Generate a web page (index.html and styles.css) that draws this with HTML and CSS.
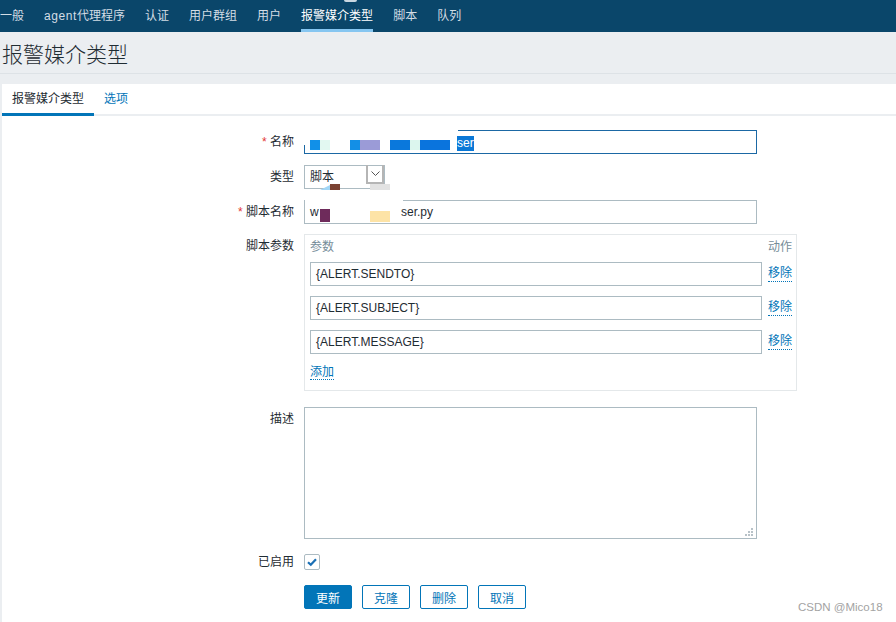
FILE: index.html
```html
<!DOCTYPE html>
<html lang="zh">
<head>
<meta charset="utf-8">
<title>报警媒介类型</title>
<link rel="stylesheet" href="styles.css">
</head>
<body>
<nav class="topnav">
  <a>一般</a><a><span class="latin">agent</span>代理程序</a><a>认证</a><a>用户群组</a><a>用户</a><a class="active">报警媒介类型</a><a>脚本</a><a>队列</a>
  <span class="notch"></span>
</nav>
<header class="header"><h1>报警媒介类型</h1></header>
<main class="wrap">
  <div class="card">
    <div class="tabs"><span class="tab active">报警媒介类型</span><span class="tab">选项</span></div>
    <div class="form">
      <div class="row r-name">
        <div class="lbl"><span class="req">*</span> 名称</div>
        <div class="field input wide focus">
          <span class="cover cover-name"></span>
          <span class="blob b1"></span><span class="blob b2"></span><span class="blob b3"></span><span class="blob b4"></span><span class="blob b5"></span><span class="blob b6"></span><span class="blob b7"></span>
          <span class="sel">ser</span>
        </div>
      </div>
      <div class="row r-type">
        <div class="lbl">类型</div>
        <div class="field select">
          <span class="sel-text">脚本</span>
          <span class="sel-btn"><svg width="9" height="6" viewBox="0 0 9 6"><path d="M0.5 0.5 L4.5 4.5 L8.5 0.5" fill="none" stroke="#555" stroke-width="1"/></svg></span>
          <span class="blob s1"></span><span class="blob s2"></span><span class="blob s3"></span>
        </div>
      </div>
      <div class="row r-script">
        <div class="lbl"><span class="req">*</span> 脚本名称</div>
        <div class="field input wide">
          <span class="cover cover-script"></span>
          <span class="txt">w</span>
          <span class="blob p1"></span><span class="blob p2"></span>
          <span class="tail">ser.py</span>
        </div>
      </div>
      <div class="row r-params">
        <div class="lbl">脚本参数</div>
        <div class="field params">
          <div class="p-head"><span>参数</span><span>动作</span></div>
          <div class="p-row"><div class="input p-input">{ALERT.SENDTO}</div><a class="link">移除</a></div>
          <div class="p-row"><div class="input p-input">{ALERT.SUBJECT}</div><a class="link">移除</a></div>
          <div class="p-row"><div class="input p-input">{ALERT.MESSAGE}</div><a class="link">移除</a></div>
          <div class="p-add"><a class="link">添加</a></div>
        </div>
      </div>
      <div class="row r-desc">
        <div class="lbl">描述</div>
        <div class="field textarea">
          <svg class="grip" width="9" height="9" viewBox="0 0 9 9"><g fill="#b8c2c8"><rect x="6" y="0" width="2" height="2"/><rect x="3" y="3" width="2" height="2"/><rect x="6" y="3" width="2" height="2"/><rect x="0" y="6" width="2" height="2"/><rect x="3" y="6" width="2" height="2"/><rect x="6" y="6" width="2" height="2"/></g></svg>
        </div>
      </div>
      <div class="row r-check">
        <div class="lbl lbl-check">已启用</div>
        <div class="field checkbox"><svg width="14" height="14" viewBox="0 0 14 14"><path d="M3 7.2 L5.8 9.8 L11 4.2" fill="none" stroke="#1a6fb5" stroke-width="2.2"/></svg></div>
      </div>
      <div class="row r-buttons">
        <div class="lbl"></div>
        <div class="buttons">
          <button class="btn primary">更新</button>
          <button class="btn">克隆</button>
          <button class="btn">删除</button>
          <button class="btn">取消</button>
        </div>
      </div>
    </div>
  </div>
</main>
<div class="watermark">CSDN @Mico18</div>
</body>
</html>
```
FILE: styles.css
```css
* { box-sizing: border-box; margin: 0; padding: 0; }
html, body { width: 896px; height: 622px; overflow: hidden; }
body {
  background: #ebeef1;
  font-family: "Liberation Sans", "Noto Sans CJK SC", Arial, sans-serif;
  font-size: 12px;
  color: #1f2c33;
  position: relative;
}
a { text-decoration: none; cursor: pointer; }

.topnav {
  height: 32px;
  background: #0a466a;
  display: flex;
  gap: 20px;
  position: relative;
}
.topnav a {
  display: block;
  height: 32px;
  line-height: 32px;
  color: #d3dde5;
}
.topnav .latin { letter-spacing: 0.6px; }
.topnav a.active {
  color: #ffffff;
  box-shadow: inset 0 -3px 0 #86c6f1;
}
.notch {
  position: absolute;
  left: 344px;
  top: 0;
  width: 13px;
  height: 2px;
  border-radius: 0 0 6px 6px;
  background: #c9d7e1;
}

.header {
  height: 42px;
  border-bottom: 1px solid #dde2e6;
  padding: 11px 0 0 2px;
}
.header h1 {
  font-size: 21px;
  line-height: 24px;
  font-weight: 300;
  color: #1f2c33;
}

.wrap { padding: 10px 0 0 2px; }
.card {
  background: #ffffff;
  height: 538px;
}
.tabs {
  height: 32px;
  display: flex;
  box-shadow: inset 0 -2px 0 #ebeef1;
}
.tab {
  padding: 0 10px;
  line-height: 31px;
  height: 32px;
  color: #0275b8;
}
.tab.active {
  color: #1f2c33;
  box-shadow: inset 0 -3px 0 #0275b8;
}

.form { padding-top: 14px; }
.row { display: flex; align-items: flex-start; }
.r-type { margin-top: 11px; }
.r-script { margin-top: 11px; }
.r-params { margin-top: 10px; }
.r-desc { margin-top: 16px; }
.r-check { margin-top: 15px; }
.r-buttons { margin-top: 15px; }

.lbl {
  width: 292px;
  flex: none;
  text-align: right;
  line-height: 24px;
  margin-right: 10px;
}
.lbl-check { line-height: 16px; }
.req { color: #e33734; }

.field { position: relative; flex: none; }
.input {
  height: 24px;
  border: 1px solid #acbbc2;
  padding: 0 5px;
  line-height: 22px;
  background: #fff;
}
.wide { width: 453px; }
.input.focus { border-color: #1b68a4; }

.cover { position: absolute; background: #fff; }
.cover-name { left: -2px; top: -2px; width: 155px; height: 16px; }
.cover-script { left: 0; top: -1px; width: 98px; height: 1px; }

.blob { position: absolute; }
.b1 { left: 5px; top: 9px; width: 10px; height: 10px; background: #1190e8; }
.b2 { left: 15px; top: 9px; width: 10px; height: 10px; background: #e2f8f1; }
.b3 { left: 45px; top: 9px; width: 10px; height: 10px; background: #138fe6; }
.b4 { left: 55px; top: 9px; width: 20px; height: 10px; background: #9b9bd7; }
.b5 { left: 85px; top: 9px; width: 20px; height: 10px; background: #0a78dc; }
.b6 { left: 105px; top: 9px; width: 10px; height: 10px; background: #dcf6ee; }
.b7 { left: 115px; top: 9px; width: 30px; height: 10px; background: #0a74dd; }
.sel {
  position: absolute;
  left: 152px;
  top: 5px;
  height: 15px;
  line-height: 15px;
  background: #0a78d7;
  color: #fff;
}

.select {
  width: 81px;
  height: 24px;
  border: 1px solid #acbbc2;
  display: flex;
}
.sel-text { flex: 1; padding-left: 5px; line-height: 22px; }
.sel-btn {
  width: 18px;
  height: 19px;
  border: 2px solid #b5b5b5;
  border-top: 0;
  margin-top: -1px;
  display: flex;
  align-items: center;
  justify-content: center;
}
.s1 { left: 15px; top: 19px; width: 10px; height: 5px; background: #a2d6f6; clip-path: polygon(100% 0, 100% 100%, 0 100%); }
.s2 { left: 25px; top: 18px; width: 10px; height: 6px; background: #7b4232; }
.s3 { left: 65px; top: 18px; width: 20px; height: 6px; background: #e2e2e2; }

.txt { display: inline-block; }
.p1 { left: 15px; top: 8px; width: 10px; height: 13px; background: #6e2b5b; }
.p2 { left: 65px; top: 10px; width: 20px; height: 11px; background: #fde3a6; }
.tail { position: absolute; left: 96px; top: 0; }

.params {
  width: 493px;
  height: 157px;
  border: 1px solid #e4e8ea;
  padding: 4px 4px 0 5px;
}
.p-head {
  display: flex;
  justify-content: space-between;
  line-height: 16px;
  color: #768d99;
  margin-bottom: 7px;
}
.p-row { display: flex; align-items: center; gap: 6px; margin-bottom: 10px; }
.p-input { width: 452px; padding-left: 5px; }
.link {
  color: #0275b8;
  border-bottom: 1px dotted #0275b8;
  line-height: 15px;
}
.p-add { margin-top: 1px; line-height: 16px; }

.textarea {
  width: 453px;
  height: 132px;
  border: 1px solid #acbbc2;
  background: #fff;
}
.grip { position: absolute; right: 2px; bottom: 1px; }

.checkbox {
  width: 16px;
  height: 16px;
  border: 1px solid #acbbc2;
  border-radius: 2px;
  display: flex;
  align-items: center;
  justify-content: center;
}

.buttons { display: flex; gap: 10px; }
.btn {
  width: 48px;
  height: 24px;
  border: 1px solid #0275b8;
  border-radius: 2px;
  background: #fff;
  color: #0275b8;
  font-family: "Liberation Sans", "Noto Sans CJK SC", Arial, sans-serif;
  font-size: 12px;
}
.btn.primary { background: #0275b8; color: #fff; }

.watermark {
  position: absolute;
  left: 798px;
  top: 601px;
  font-size: 11.5px;
  color: #a3a3a3;
}
```
